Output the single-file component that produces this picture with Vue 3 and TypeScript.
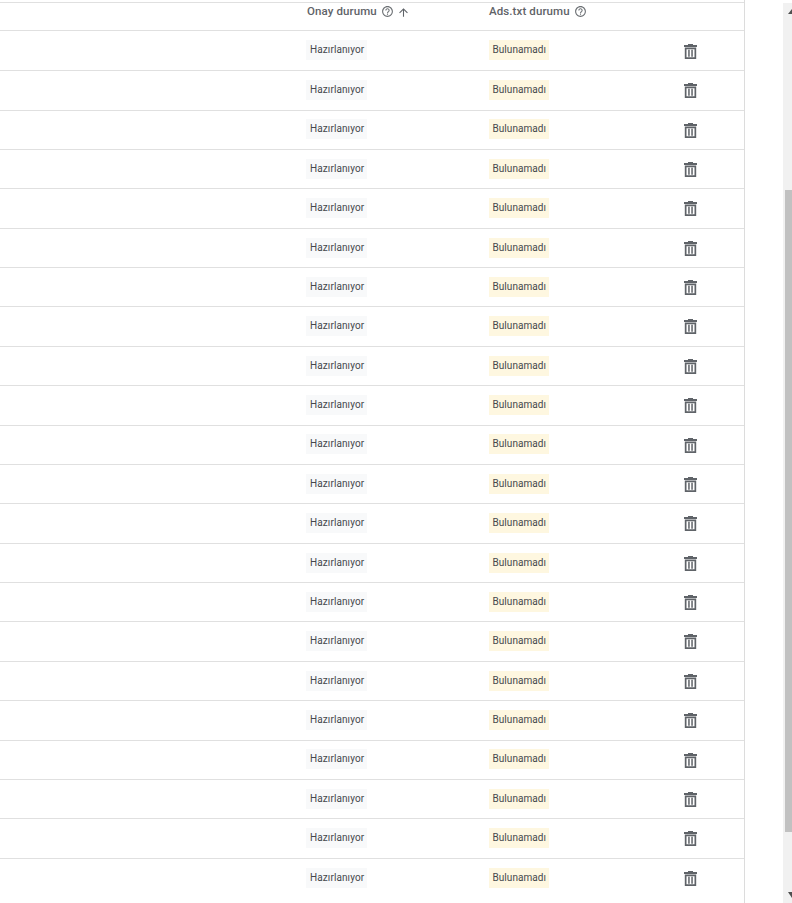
<script setup lang="ts">
const rows: number[] = Array.from({ length: 22 }, (_, i) => i);
</script>

<template>
  <div class="page">
    <div class="table">
      <div class="row head">
        <div class="cell first"></div>
        <div class="cell approval">
          <span>Onay durumu</span>
          <svg class="help" viewBox="0 0 24 24" width="13" height="13"><path d="M11 18h2v-2h-2v2zm1-16C6.48 2 2 6.48 2 12s4.48 10 10 10 10-4.48 10-10S17.52 2 12 2zm0 18c-4.41 0-8-3.59-8-8s3.59-8 8-8 8 3.59 8 8-3.59 8-8 8zm0-14c-2.21 0-4 1.79-4 4h2c0-1.1.9-2 2-2s2 .9 2 2c0 2-3 1.75-3 5h2c0-2.25 3-2.5 3-5 0-2.21-1.79-4-4-4z" /></svg>
          <svg class="sort" viewBox="0 0 24 24" width="13" height="13"><path d="M4 12l1.41 1.41L11 7.83V20h2V7.83l5.58 5.59L20 12l-8-8-8 8z" /></svg>
        </div>
        <div class="cell ads">
          <span>Ads.txt durumu</span>
          <svg class="help" viewBox="0 0 24 24" width="13" height="13"><path d="M11 18h2v-2h-2v2zm1-16C6.48 2 2 6.48 2 12s4.48 10 10 10 10-4.48 10-10S17.52 2 12 2zm0 18c-4.41 0-8-3.59-8-8s3.59-8 8-8 8 3.59 8 8-3.59 8-8 8zm0-14c-2.21 0-4 1.79-4 4h2c0-1.1.9-2 2-2s2 .9 2 2c0 2-3 1.75-3 5h2c0-2.25 3-2.5 3-5 0-2.21-1.79-4-4-4z" /></svg>
        </div>
        <div class="cell action"></div>
      </div>
      <div v-for="r in rows" :key="r" class="row item">
        <div class="cell first"></div>
        <div class="cell approval"><span class="chip neutral">Hazırlanıyor</span></div>
        <div class="cell ads"><span class="chip warning">Bulunamadı</span></div>
        <div class="cell action">
          <svg class="trash" viewBox="0 0 13 15" width="13" height="15"><path d="M4 0h5v1h4v2H0V1h4zM.8 3.6h11.4V15H.8zm1.7 1.7v8h8v-8zM4.2 5.8h1.5v7H4.2zm3.1 0h1.5v7H7.3z" fill-rule="evenodd" /></svg>
        </div>
      </div>
    </div>
    <div class="scrollbar">
      <div class="arrow up"></div>
      <div class="track"><div class="thumb"></div></div>
      <div class="arrow down"></div>
    </div>
  </div>
</template>

<style>
html, body { margin: 0; background: #fff; overflow: hidden; }
</style>

<style scoped>
.page {
  height: 903px;
  width: 792px;
  display: flex;
  justify-content: space-between;
  overflow: hidden;
  font-family: Roboto, "Noto Sans", sans-serif;
  background: #fff;
}
.table {
  width: 745px;
  height: 903px;
  box-sizing: border-box;
  padding-top: 2px;
  border-right: 1px solid #dcdcdc;
  overflow: hidden;
}
.row {
  display: grid;
  grid-template-columns: 306px 183px 149px 105px;
  box-sizing: border-box;
  border-top: 1px solid #e0e0e0;
}
.head { height: 28.4px; color: #5f6368; font-size: 11.5px; font-weight: 500; letter-spacing: 0.1px; }
.item { height: 39.39px; }
.head + .item { height: 39.77px; }
.cell { display: flex; align-items: center; min-width: 0; }
.head .cell { align-items: flex-start; padding-top: 1px; line-height: 14px; }
.head .approval { padding-left: 1px; }
.help { fill: #6b6f73; margin-left: 4px; margin-top: 1px; }
.sort { fill: #5f6368; margin-left: 3px; margin-top: 2px; }
.chip {
  box-sizing: border-box;
  height: 20px;
  width: 61px;
  margin-bottom: 0.6px;
  padding-left: 4px;
  line-height: 20px;
  font-size: 10px;
  letter-spacing: 0.1px;
  color: #45484c;
  white-space: nowrap;
}
.neutral { background: #f8f9fa; }
.warning { background: #fef7e0; width: 60px; padding-left: 3.5px; letter-spacing: 0.05px; }
.action { padding-left: 46px; }
.trash { fill: #5f6368; margin-top: 0.8px; }
.scrollbar {
  width: 9px;
  height: 900px;
  margin-top: 3px;
  display: flex;
  flex-direction: column;
  background: #f1f1f1;
  overflow: hidden;
}
.arrow { height: 11px; flex: none; display: flex; justify-content: flex-end; }
.arrow::after {
  content: "";
  display: block;
  width: 0;
  height: 0;
  margin-right: -4px;
  border-left: 4px solid transparent;
  border-right: 4px solid transparent;
}
.up::after { margin-top: 6px; border-bottom: 5px solid #505050; }
.down::after { margin-top: 0; border-top: 6px solid #505050; }
.track { flex: 1; padding: 176px 0 0 2px; }
.thumb { height: 642px; background: #c1c1c1; }
</style>
